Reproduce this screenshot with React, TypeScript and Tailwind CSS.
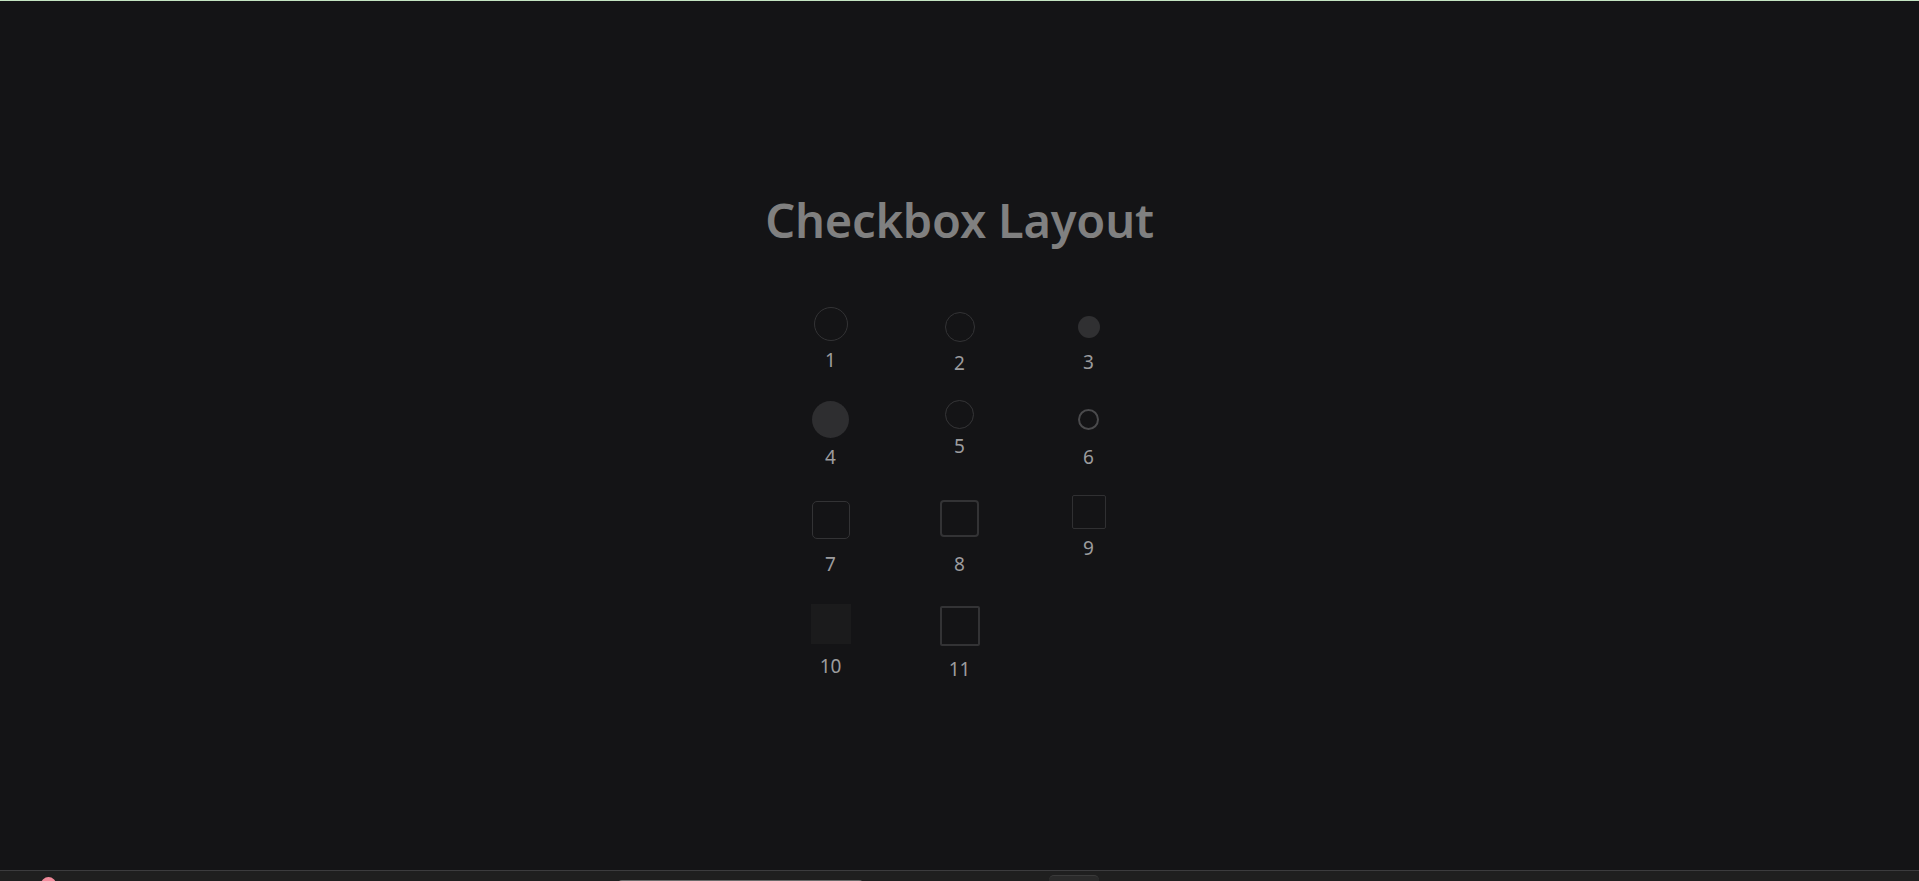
import React from 'react';

type Item = {
    label: string;
    box: string;
    mt: string;
    gap: string;
};

const items: Item[] = [
    { label: '1', box: 'w-[34px] h-[34px] rounded-full border border-[#333335]', mt: 'mt-0', gap: 'mt-[9px]' },
    { label: '2', box: 'w-[30px] h-[30px] rounded-full border border-[#333335]', mt: 'mt-[5px]', gap: 'mt-[11px]' },
    { label: '3', box: 'w-[22px] h-[22px] rounded-full bg-[#303032]', mt: 'mt-[9px]', gap: 'mt-[14px]' },
    { label: '4', box: 'w-[37px] h-[37px] rounded-full bg-[#2e2e30]', mt: 'mt-px', gap: 'mt-[9px]' },
    { label: '5', box: 'w-[29px] h-[29px] rounded-full border border-[#353537]', mt: 'mt-0', gap: 'mt-[7px]' },
    { label: '6', box: 'w-[21px] h-[21px] rounded-full border-2 border-[#4a4a4c]', mt: 'mt-[9px]', gap: 'mt-[17px]' },
    { label: '7', box: 'w-[38px] h-[38px] rounded-[5px] border border-[#333335]', mt: 'mt-[6px]', gap: 'mt-[15px]' },
    { label: '8', box: 'w-[39px] h-[37px] rounded-[4px] border-2 border-[#333335]', mt: 'mt-[5px]', gap: 'mt-[17px]' },
    { label: '9', box: 'w-[34px] h-[34px] rounded-[2px] border border-[#303032]', mt: 'mt-0', gap: 'mt-[9px]' },
    { label: '10', box: 'w-[40px] h-[40px] bg-[#1b1b1c]', mt: 'mt-0', gap: 'mt-[12px]' },
    { label: '11', box: 'w-[40px] h-[40px] rounded-[2px] border-2 border-[#333335]', mt: 'mt-[2px]', gap: 'mt-[13px]' },
];

const Cell: React.FC<{ item: Item }> = ({ item }) => (
    <div className={`flex flex-col items-center ${item.mt}`}>
        <div className={item.box}></div>
        <span className={`${item.gap} text-[19px] leading-[20px] text-[#9c9c9e]`}>{item.label}</span>
    </div>
);

const App: React.FC = () => {
    return (
        <div className="h-screen flex flex-col bg-[#141416] overflow-hidden" style={{ fontFamily: '"Noto Sans", "Open Sans", sans-serif' }}>
            <div className="h-px bg-[#c4e4c2]"></div>
            <main className="flex-1 flex flex-col items-center">
                <h1 className="mt-[196px] text-[47px] leading-none font-semibold text-[#808080] tracking-[-0.2px]">
                    Checkbox Layout
                </h1>
                <div className="mt-[63px] grid grid-cols-[repeat(3,129px)] grid-rows-[93px_95px_109px_auto] items-start">
                    {items.map((item) => (
                        <Cell key={item.label} item={item} />
                    ))}
                </div>
            </main>
            <footer className="h-[11px] border-t border-[#3c3c3e] bg-[#1f1f1f] flex items-start overflow-hidden">
                <div className="ml-[41px] mt-[6px] w-[15px] h-[15px] rounded-full bg-[#f08a9a]"></div>
                <div className="ml-[562px] mt-[9px] w-[245px] h-[8px] rounded-t-[4px] bg-[#2c2c2c] border-t border-[#6a6a6a]"></div>
                <div className="ml-[186px] mt-[4px] w-[50px] h-[12px] rounded-t-[5px] bg-[#2a2a2a] border-t border-[#3a3a3a]"></div>
            </footer>
        </div>
    );
};

export default App;
